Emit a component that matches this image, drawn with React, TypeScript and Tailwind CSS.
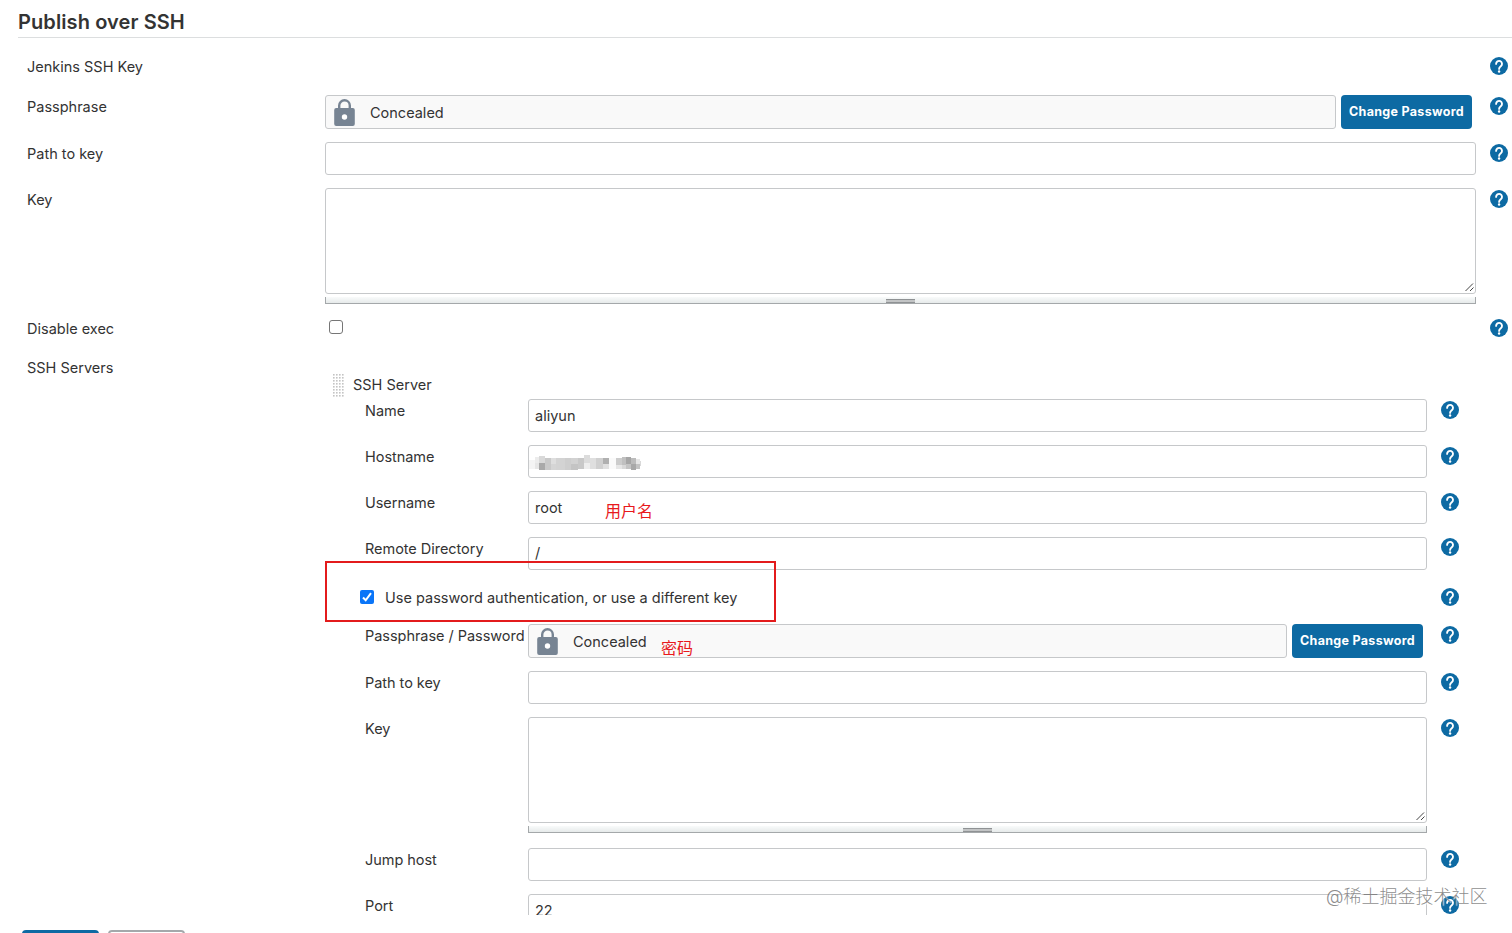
import { ReactNode } from 'react';
import { clsx } from 'clsx';

const DOT_ROWS = [1, 4, 7, 10, 13, 16, 19, 22];
const DOT_COLS = [1, 4, 7, 10];

// pixelated host address: x, y, width, height, fill
const MOSAIC: [number, number, number, number, string][] = [
  [0, 5, 6, 9, '#f4f4f4'],
  [6, 2, 4, 6, '#ececec'],
  [10, 1, 6, 7, '#d9d9d9'],
  [6, 8, 4, 6, '#e6e6e6'],
  [10, 8, 6, 7, '#a9a9a9'],
  [16, 3, 6, 12, '#c9c9c9'],
  [22, 3, 5, 6, '#dedede'],
  [22, 9, 5, 6, '#d5d5d5'],
  [27, 3, 9, 12, '#d3d3d3'],
  [36, 3, 6, 12, '#cecece'],
  [42, 3, 7, 6, '#d2d2d2'],
  [42, 9, 7, 6, '#c4c4c4'],
  [49, 3, 6, 11, '#c8c8c8'],
  [55, 0, 6, 8, '#dcdcdc'],
  [55, 8, 6, 6, '#ededed'],
  [61, 3, 6, 11, '#dfdfdf'],
  [67, 3, 7, 11, '#d0d0d0'],
  [74, 3, 6, 6, '#b0b0b0'],
  [74, 9, 6, 5, '#e0e0e0'],
  [80, 3, 7, 11, '#fafafa'],
  [87, 3, 6, 7, '#cccccc'],
  [87, 10, 6, 4, '#e6e6e6'],
  [93, 2, 4, 8, '#c0c0c0'],
  [93, 10, 4, 4, '#d8d8d8'],
  [97, 2, 5, 7, '#a6a6a6'],
  [97, 9, 5, 5, '#c4c4c4'],
  [102, 3, 5, 6, '#bcbcbc'],
  [102, 9, 5, 6, '#a8a8a8'],
  [107, 4, 4, 5, '#e6e6e6'],
  [107, 9, 4, 5, '#c3c3c3'],
  [111, 6, 1, 5, '#d9d9d9'],
];

function HelpIcon() {
  return (
    <svg className="w-[18px] h-[18px] shrink-0" viewBox="0 0 18 18">
      <circle cx="9" cy="9" r="9" fill="#0d6aa3" />
      <path
        d="M6.1 6.9a2.95 2.95 0 1 1 4.9 2.2C9.8 10.1 9.1 10.4 9.1 11.9"
        fill="none"
        stroke="#fff"
        strokeWidth="1.9"
        strokeLinecap="round"
      />
      <circle cx="9.1" cy="14.5" r="1.2" fill="#fff" />
    </svg>
  );
}

function LockIcon() {
  return (
    <svg className="w-[21px] h-[27px] shrink-0" viewBox="0 0 21 27">
      <path d="M5.2 10V6.6a5.3 5.3 0 0 1 10.6 0V10" fill="none" stroke="#778493" strokeWidth="2.4" />
      <rect x="0.2" y="9" width="20.6" height="18" rx="2" fill="#778493" />
      <circle cx="10.5" cy="18" r="2.7" fill="#fff" />
    </svg>
  );
}

function TextBox({ value, children }: { value?: string; children?: ReactNode }) {
  return (
    <div className="relative w-full h-[33px] flex items-center rounded-[3px] border border-[#c6c8ca] px-1.5">
      {value}
      {children}
    </div>
  );
}

function TextArea() {
  return (
    <div>
      <div className="h-[106px] flex items-end justify-end rounded-[3px] border border-[#c6c8ca]">
        <svg className="mb-px w-[10px] h-[10px]" viewBox="0 0 10 10" stroke="#444" strokeWidth="1">
          <path d="M0.5 9L8 1.5M5 9L8.5 5.5" />
        </svg>
      </div>
      <div className="mt-[3px] h-[7px] flex items-end justify-center border border-t-0 border-[#a4a8aa] bg-linear-to-b from-[#f9fbfb] to-[#e6eaea]">
        <div className="w-[29px] h-[4px] border-y border-[#8f9294] bg-[#c2c4c5]" />
      </div>
    </div>
  );
}

function Concealed({ children }: { children?: ReactNode }) {
  return (
    <div className="flex h-[34px]">
      <div className="relative flex flex-1 items-center rounded-[3px] border border-[#c6c8ca] bg-[#f9f9f9] pl-2">
        <LockIcon />
        <span className="ml-[15px] pt-0.5">Concealed</span>
        {children}
      </div>
      <button className="ml-[5px] w-[131px] rounded-[4px] bg-[#0d6aa3] pt-px text-[12.5px] font-bold tracking-[0.3px] text-white whitespace-nowrap">
        Change Password
      </button>
    </div>
  );
}

interface RowProps {
  label: string;
  height: string;
  nested?: boolean;
  help?: boolean;
  children?: ReactNode;
}

function Row({ label, height, nested, help = true, children }: RowProps) {
  return (
    <div className={clsx('flex items-start', height)}>
      <div className={clsx('shrink-0 leading-6 whitespace-nowrap', nested ? 'w-[163px] tracking-[-0.04px]' : 'w-[298px]')}>{label}</div>
      <div className={clsx('shrink-0', nested ? 'w-[899px]' : 'w-[1151px]')}>{children}</div>
      {help && (
        <div className="ml-[14px] mt-[1.5px]">
          <HelpIcon />
        </div>
      )}
    </div>
  );
}

export default function App() {
  return (
    <div className="relative w-[1512px] h-[933px] overflow-hidden bg-white font-['Inter','Noto_Sans_CJK_SC',sans-serif] text-[14.5px] text-[#333]">
      <div className="h-[915px] overflow-hidden">
        <h1 className="ml-[18px] h-[38px] border-b border-[#dcdedf] pt-2 text-[20px] leading-[28px] font-semibold tracking-[0.1px]">
          Publish over SSH
        </h1>

        <div className="pl-[27px] pt-[17px]">
          <Row label="Jenkins SSH Key" height="h-10" />
          <Row label="Passphrase" height="h-[47px]">
            <div className="pr-1">
              <Concealed />
            </div>
          </Row>
          <Row label="Path to key" height="h-[46px]">
            <TextBox />
          </Row>
          <Row label="Key" height="h-[129px]">
            <TextArea />
          </Row>
          <Row label="Disable exec" height="h-[39px]">
            <div className="ml-1 mt-[3px] size-[14px] rounded-[3px] border border-[#767676]" />
          </Row>

          <div className="flex items-start">
            <div className="w-[298px] shrink-0 leading-6">SSH Servers</div>
            <div className="relative pt-[17px]">
              <div className="flex h-[26px] items-start pl-[7px]">
                <svg className="mt-[1px] w-[13px] h-[23px]" viewBox="0 0 13 23" fill="#c4c4c4">
                  {DOT_ROWS.map(y => DOT_COLS.map(x => <rect key={`${x}-${y}`} x={x} y={y - 1} width="1.6" height="1.6" />))}
                </svg>
                <span className="ml-2 leading-6">SSH Server</span>
              </div>

              <div className="pl-10">
                <Row nested label="Name" height="h-[46px]">
                  <TextBox value="aliyun" />
                </Row>
                <Row nested label="Hostname" height="h-[46px]">
                  <TextBox>
                    <svg className="absolute left-0 top-[9px] w-[114px] h-[16px]" viewBox="0 0 114 16">
                      {MOSAIC.map(([x, y, w, h, fill], i) => (
                        <rect key={i} x={x} y={y} width={w} height={h} fill={fill} />
                      ))}
                    </svg>
                  </TextBox>
                </Row>
                <Row nested label="Username" height="h-[45.5px]">
                  <TextBox value="root">
                    <span className="absolute left-[76px] top-[7px] text-[16px] leading-6 text-[#e8191c]">用户名</span>
                  </TextBox>
                </Row>
                <Row nested label="Remote Directory" height="h-[46.5px]">
                  <TextBox value="/" />
                </Row>
                <div className="flex h-[41px] items-start">
                  <div className="-ml-[5px] mt-[7px] flex size-[14px] items-center justify-center rounded-[2px] bg-[#0a75f8]">
                    <svg className="size-[12px]" viewBox="0 0 12 12" fill="none" stroke="#fff" strokeWidth="2">
                      <path d="M2 6.5l2.7 2.8L10 2.2" />
                    </svg>
                  </div>
                  <span className="ml-[11px] mt-[3px] leading-6 whitespace-nowrap">
                    Use password authentication, or use a different key
                  </span>
                  <div className="ml-auto mt-[5px]">
                    <HelpIcon />
                  </div>
                </div>
                <Row nested label="Passphrase / Password" height="h-[47px]">
                  <div className="pr-1">
                    <Concealed>
                      <span className="absolute left-[132px] top-[11px] text-[16px] leading-6 text-[#e8191c]">密码</span>
                    </Concealed>
                  </div>
                </Row>
                <Row nested label="Path to key" height="h-[46px]">
                  <TextBox />
                </Row>
                <Row nested label="Key" height="h-[131px]">
                  <TextArea />
                </Row>
                <Row nested label="Jump host" height="h-[46px]">
                  <TextBox />
                </Row>
                <Row nested label="Port" height="h-[46px]">
                  <TextBox value="22" />
                </Row>
              </div>

              {/* red callout around the password option */}
              <div className="absolute left-0 top-[205px] w-[451px] h-[61px] border-2 border-[#e31b1c]" />
            </div>
          </div>
        </div>
      </div>

      <div className="flex gap-[9px] pl-[22px] pt-[15px]">
        <div className="w-[77px] h-8 rounded-[4px] bg-[#0d6aa3]" />
        <div className="w-[77px] h-8 rounded-[4px] border-2 border-[#a4a8ab]" />
      </div>

      <div className="absolute left-[1326px] top-[885px] text-[18px] leading-6 text-[#777]/85 font-light whitespace-nowrap [text-shadow:1px_1px_1px_#fff]">
        @稀土掘金技术社区
      </div>
    </div>
  );
}
